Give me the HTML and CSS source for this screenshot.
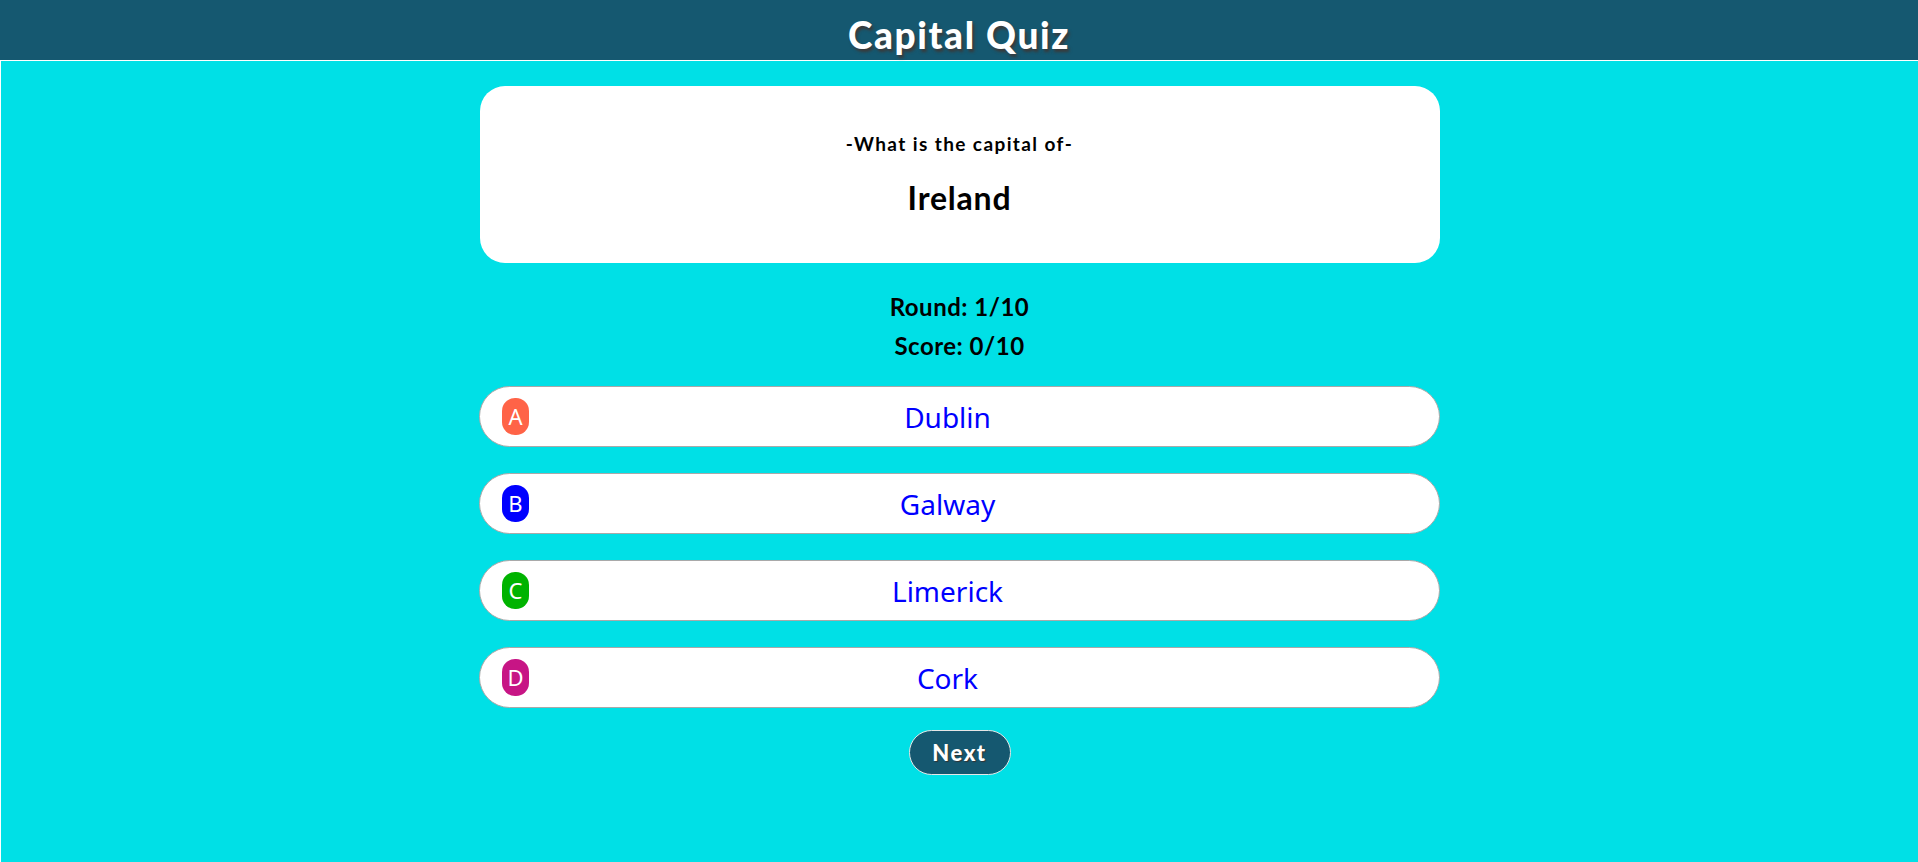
FILE: index.html
```html
<!DOCTYPE html>
<html lang="en">
<head>
<meta charset="utf-8">
<title>Capital Quiz</title>
<link rel="stylesheet" href="styles.css">
</head>
<body>
<header class="topbar">
  <h1 class="title">Capital Quiz</h1>
</header>
<main class="stage">
  <section class="card">
    <p class="prompt">-What is the capital of-</p>
    <h2 class="country">Ireland</h2>
  </section>
  <div class="stats">
    <p class="stat">Round: 1/10</p>
    <p class="stat">Score: 0/10</p>
  </div>
  <div class="answers">
    <button class="answer"><span class="badge badge-a">A</span><span class="answer-text">Dublin</span></button>
    <button class="answer"><span class="badge badge-b">B</span><span class="answer-text">Galway</span></button>
    <button class="answer"><span class="badge badge-c">C</span><span class="answer-text">Limerick</span></button>
    <button class="answer"><span class="badge badge-d">D</span><span class="answer-text">Cork</span></button>
  </div>
  <button class="next">Next</button>
</main>
</body>
</html>
```

FILE: styles.css
```css
* { box-sizing: border-box; }
html, body { margin: 0; padding: 0; }
body {
  background: #00e0e6;
  font-family: "Lato", "Noto Sans", sans-serif;
  color: #000;
  overflow: hidden;
}
.topbar {
  height: 61px;
  background: #155870;
  border-bottom: 1px solid #fff;
  display: flex;
  justify-content: center;
  align-items: center;
}
.title {
  margin: 0;
  color: #fff;
  font-family: "Lato", sans-serif;
  font-weight: 900;
  font-size: 37px;
  letter-spacing: 1.6px;
  line-height: 1;
  padding-top: 8px;
  text-shadow: 2px 3px 3px #3a3a3a;
}
.stage {
  min-height: 801px;
  border-left: 1px solid #fff;
  display: flex;
  flex-direction: column;
  align-items: center;
  padding-top: 25px;
}
.card {
  width: 960px;
  height: 177px;
  background: #fff;
  border-radius: 25px;
  display: flex;
  flex-direction: column;
  align-items: center;
  padding-top: 46px;
}
.prompt {
  margin: 0;
  font-size: 19px;
  font-weight: 700;
  letter-spacing: 1.4px;
  line-height: 24px;
}
.country {
  margin: 24px 0 0;
  font-size: 32px;
  font-weight: 700;
  letter-spacing: 0.8px;
  line-height: 36px;
}
.stats {
  margin-top: 24px;
  display: flex;
  flex-direction: column;
  align-items: center;
}
.stat {
  margin: 0;
  font-size: 24px;
  font-weight: 700;
  letter-spacing: 0.5px;
  line-height: 39px;
}
.answers {
  margin-top: 21px;
  display: flex;
  flex-direction: column;
  gap: 26px;
}
.answer {
  width: 961px;
  height: 61px;
  background: #fff;
  border: 1px solid #a9a9a9;
  border-radius: 31px;
  display: flex;
  align-items: center;
  padding: 0 0 0 22px;
  cursor: pointer;
  font-family: "Noto Sans", sans-serif;
}
.badge {
  width: 27px;
  height: 37px;
  border-radius: 13px;
  color: #fff;
  font-family: "Noto Sans", sans-serif;
  font-size: 22px;
  line-height: 37px;
  text-align: center;
  flex: none;
}
.badge-a { background: #ff6347; }
.badge-b { background: #0000ff; }
.badge-c { background: #00b300; }
.badge-d { background: #c71585; }
.answer-text {
  flex: 1;
  text-align: center;
  padding-right: 73px;
  color: #0000ff;
  font-size: 28px;
  font-weight: 400;
}
.next {
  margin-top: 22px;
  width: 102px;
  height: 45px;
  border-radius: 23px;
  background: #155870;
  border: 1px solid #e6e6e6;
  color: #fff;
  font-family: "Lato", sans-serif;
  font-weight: 900;
  font-size: 22px;
  letter-spacing: 1.5px;
  text-shadow: 1px 1px 1px #333;
  cursor: pointer;
}
```
